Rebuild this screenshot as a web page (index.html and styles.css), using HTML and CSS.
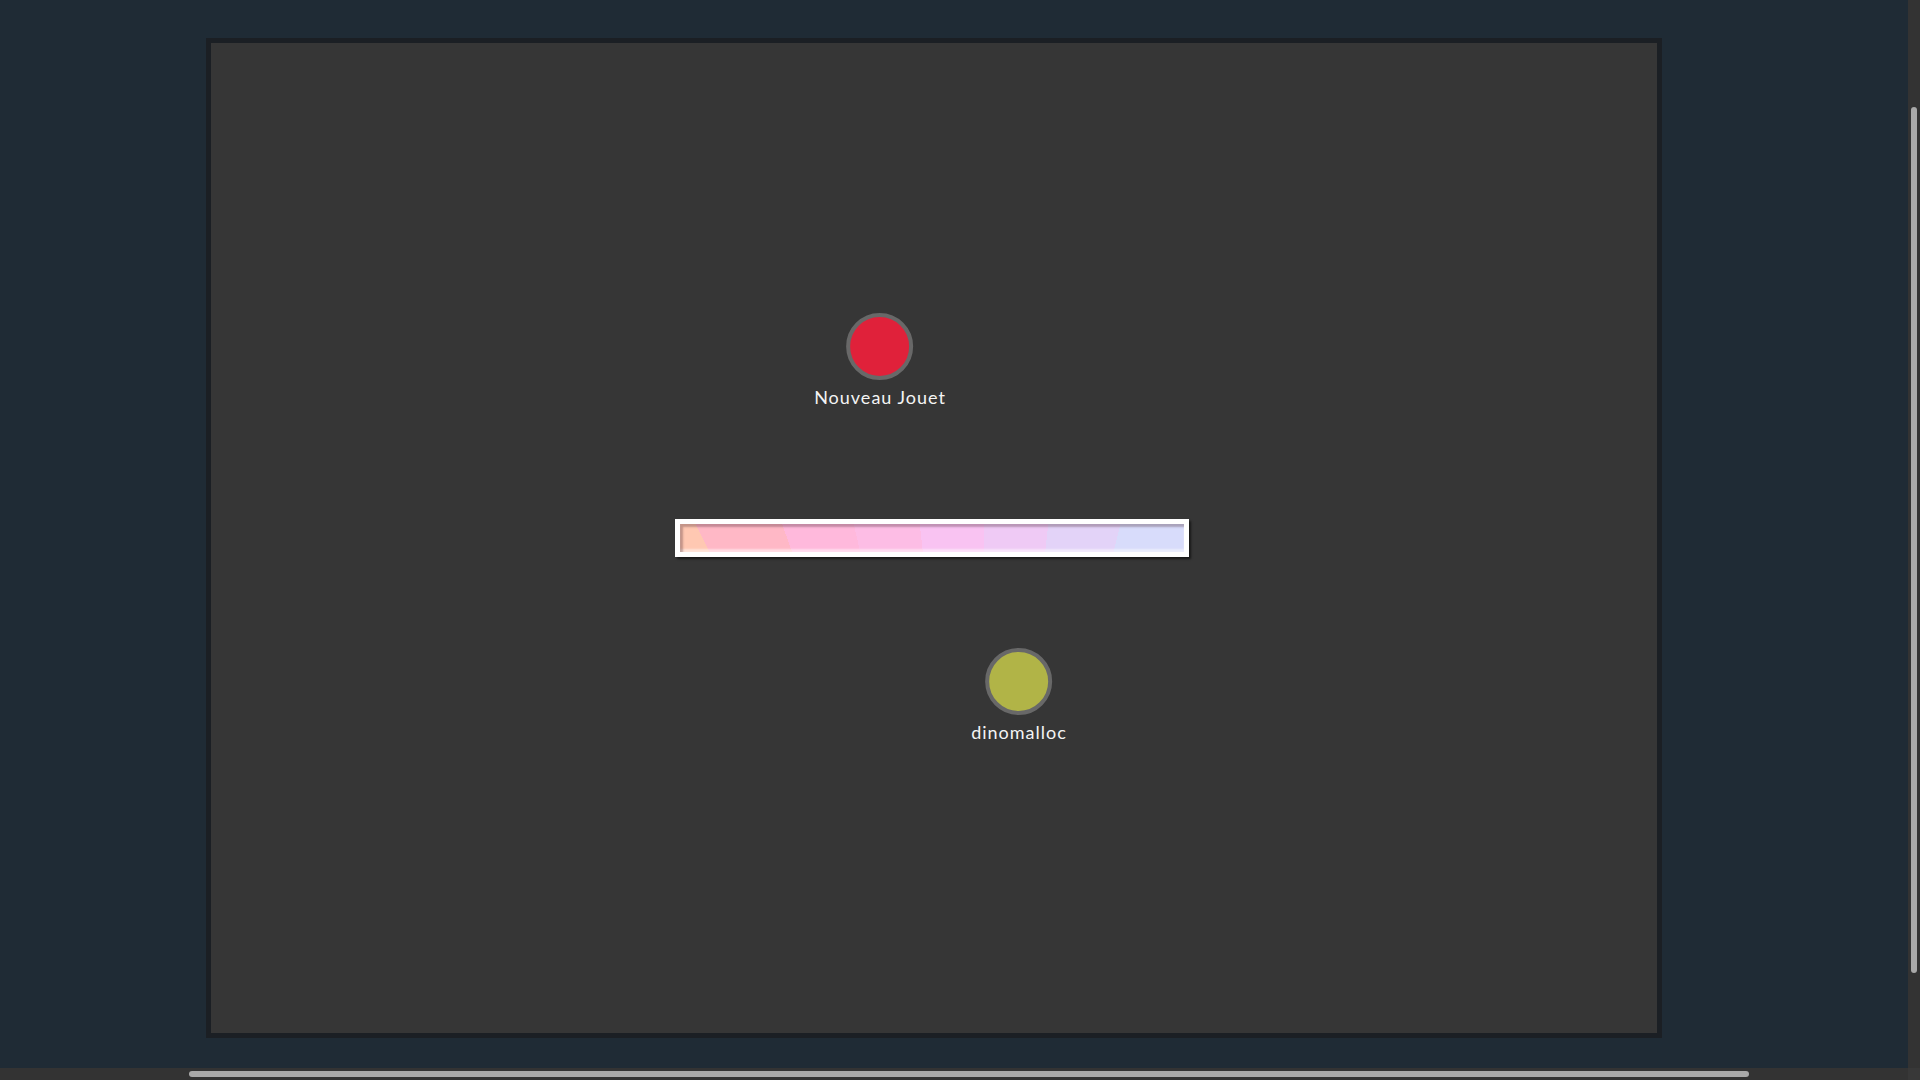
FILE: index.html
```html
<!DOCTYPE html>
<html lang="fr">
<head>
<meta charset="utf-8">
<title>Canvas</title>
<link rel="stylesheet" href="styles.css">
</head>
<body>
<div class="screen">
  <main class="page">
    <section class="board">
      <div class="canvas">
        <div class="node" style="left:669px;top:270px">
          <div class="dot dot-red"></div>
          <div class="label">Nouveau Jouet</div>
        </div>
        <div class="bar" style="left:464px;top:476px">
          <div class="bar-fill"></div>
        </div>
        <div class="node" style="left:808px;top:605px">
          <div class="dot dot-olive"></div>
          <div class="label">dinomalloc</div>
        </div>
      </div>
    </section>
  </main>
  <div class="vscroll"><div class="vthumb"></div></div>
  <div class="hscroll"><div class="hthumb"></div></div>
  <div class="corner"></div>
</div>
</body>
</html>
```
FILE: styles.css
```css
html, body {
  margin: 0;
  padding: 0;
  overflow: hidden;
}
body {
  font-family: "Lato", "DejaVu Sans", sans-serif;
}
.screen {
  display: grid;
  grid-template-columns: 1908px 12px;
  grid-template-rows: 1068px 12px;
  width: 1920px;
  height: 1080px;
}
.page {
  background: #1f2b35;
  padding: 38px 0 0 206px;
  overflow: hidden;
}
.board {
  width: 1446px;
  height: 990px;
  border: 5px solid #1b1f24;
  background: #363636;
}
.canvas {
  position: relative;
  width: 100%;
  height: 100%;
}
.node {
  position: absolute;
  display: flex;
  flex-direction: column;
  align-items: center;
  transform: translateX(-50%);
}
.dot {
  width: 59px;
  height: 59px;
  border-radius: 50%;
  border: 4px solid #686868;
}
.dot-red { background: #e0213a; }
.dot-olive { background: #b1b447; }
.label {
  margin-top: 7px;
  color: #f4f4f4;
  font-size: 18px;
  line-height: 20px;
  letter-spacing: 1px;
  white-space: nowrap;
}
.bar {
  position: absolute;
  width: 504px;
  height: 28px;
  padding: 5px;
  background: #ffffff;
  box-shadow: 2px 2px 2px rgba(0, 0, 0, 0.55);
}
.bar-fill {
  width: 100%;
  height: 100%;
  background: conic-gradient(from 330deg at 304px 564px,
    #ffc8b2 0deg 2.9deg,
    #ffb8c6 2.9deg 10.3deg,
    #ffb9dc 10.3deg 17deg,
    #fdbde5 17deg 23.5deg,
    #f9c3f2 23.5deg 30deg,
    #efcaf5 30deg 36.5deg,
    #e3d3f8 36.5deg 43.6deg,
    #d8dcfb 43.6deg 360deg);
  box-shadow: inset 3px 3px 2px rgba(60, 30, 40, 0.3), inset 0 -3px 2px rgba(255, 255, 255, 0.5);
}
.vscroll {
  background: #333333;
  padding: 107px 3px 0 3px;
}
.vthumb {
  width: 6px;
  height: 866px;
  border-radius: 3px;
  background: #a9a9a9;
}
.hscroll {
  background: #333333;
  padding: 3px 0 0 189px;
}
.hthumb {
  width: 1560px;
  height: 6px;
  border-radius: 3px;
  background: #a9a9a9;
}
.corner {
  background: #383838;
}
```
